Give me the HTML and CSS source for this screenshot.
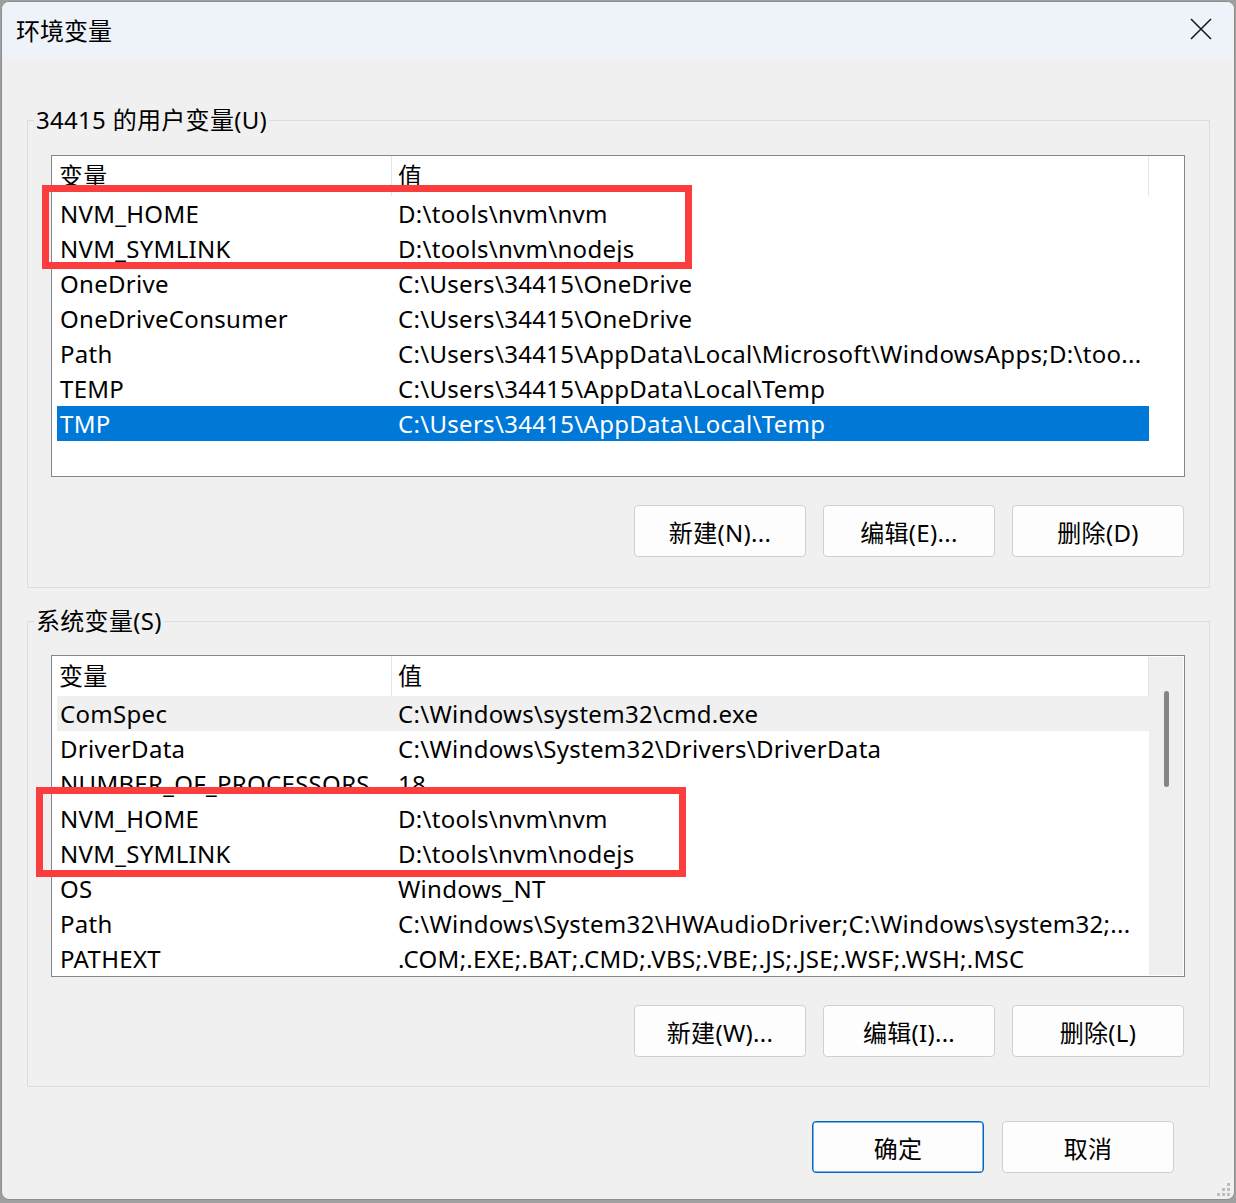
FILE: index.html
```html
<!DOCTYPE html>
<html lang="zh-CN">

<head>
    <meta charset="UTF-8">
    <meta name="viewport" content="width=device-width, initial-scale=1.0">
    <title>环境变量</title>
    <link rel="stylesheet" href="styles.css">
</head>

<body>
    <div class="dialog">
        <div class="titlebar">
            <span class="title">环境变量</span>
            <svg class="close" width="22" height="22" viewBox="0 0 22 22">
                <path d="M1 1 L21 21 M21 1 L1 21" stroke="#1a1a1a" stroke-width="1.6" fill="none" />
            </svg>
        </div>

        <div class="content">
            <!-- 用户变量 -->
            <fieldset class="group group-user">
                <legend>34415 的用户变量(U)</legend>
                <div class="list">
                    <div class="list-main">
                        <div class="list-head">
                            <div class="head-name">变量</div>
                            <div class="head-value">值</div>
                        </div>
                        <div class="row"><span class="cell-name">NVM_HOME</span><span class="cell-value">D:\tools\nvm\nvm</span></div>
                        <div class="row"><span class="cell-name">NVM_SYMLINK</span><span class="cell-value">D:\tools\nvm\nodejs</span></div>
                        <div class="row"><span class="cell-name">OneDrive</span><span class="cell-value">C:\Users\34415\OneDrive</span></div>
                        <div class="row"><span class="cell-name">OneDriveConsumer</span><span class="cell-value">C:\Users\34415\OneDrive</span></div>
                        <div class="row"><span class="cell-name">Path</span><span class="cell-value">C:\Users\34415\AppData\Local\Microsoft\WindowsApps;D:\too...</span></div>
                        <div class="row"><span class="cell-name">TEMP</span><span class="cell-value">C:\Users\34415\AppData\Local\Temp</span></div>
                        <div class="row selected"><span class="cell-name">TMP</span><span class="cell-value">C:\Users\34415\AppData\Local\Temp</span></div>
                    </div>
                    <div class="list-side"></div>
                </div>
                <div class="buttons">
                    <button class="btn">新建(N)...</button>
                    <button class="btn">编辑(E)...</button>
                    <button class="btn">删除(D)</button>
                </div>
            </fieldset>

            <!-- 系统变量 -->
            <fieldset class="group group-system">
                <legend>系统变量(S)</legend>
                <div class="list">
                    <div class="list-main">
                        <div class="list-head">
                            <div class="head-name">变量</div>
                            <div class="head-value">值</div>
                        </div>
                        <div class="row hover"><span class="cell-name">ComSpec</span><span class="cell-value">C:\Windows\system32\cmd.exe</span></div>
                        <div class="row"><span class="cell-name">DriverData</span><span class="cell-value">C:\Windows\System32\Drivers\DriverData</span></div>
                        <div class="row"><span class="cell-name">NUMBER_OF_PROCESSORS</span><span class="cell-value">18</span></div>
                        <div class="row"><span class="cell-name">NVM_HOME</span><span class="cell-value">D:\tools\nvm\nvm</span></div>
                        <div class="row"><span class="cell-name">NVM_SYMLINK</span><span class="cell-value">D:\tools\nvm\nodejs</span></div>
                        <div class="row"><span class="cell-name">OS</span><span class="cell-value">Windows_NT</span></div>
                        <div class="row"><span class="cell-name">Path</span><span class="cell-value">C:\Windows\System32\HWAudioDriver;C:\Windows\system32;...</span></div>
                        <div class="row"><span class="cell-name">PATHEXT</span><span class="cell-value">.COM;.EXE;.BAT;.CMD;.VBS;.VBE;.JS;.JSE;.WSF;.WSH;.MSC</span></div>
                    </div>
                    <div class="list-side scrollbar">
                        <div class="thumb"></div>
                    </div>
                </div>
                <div class="buttons">
                    <button class="btn">新建(W)...</button>
                    <button class="btn">编辑(I)...</button>
                    <button class="btn">删除(L)</button>
                </div>
            </fieldset>

            <div class="footer">
                <button class="btn btn-default">确定</button>
                <button class="btn">取消</button>
            </div>
        </div>

        <!-- 标注框 -->
        <div class="mark mark-user"></div>
        <div class="mark mark-system"></div>

        <svg class="grip" width="16" height="16" viewBox="0 0 16 16">
            <rect x="13" y="3" width="3" height="3" fill="#bdbdbd" />
            <rect x="8" y="8" width="3" height="3" fill="#bdbdbd" />
            <rect x="13" y="8" width="3" height="3" fill="#bdbdbd" />
            <rect x="3" y="13" width="3" height="3" fill="#bdbdbd" />
            <rect x="8" y="13" width="3" height="3" fill="#bdbdbd" />
            <rect x="13" y="13" width="3" height="3" fill="#bdbdbd" />
        </svg>
    </div>
</body>

</html>
```

FILE: styles.css
```css
body {
    margin: 0;
    background-color: #9f9f9f;
    font-family: 'Noto Sans', 'Noto Sans CJK SC', sans-serif;
    font-size: 24px;
    letter-spacing: 0.3px;
    color: #000;
    height: 1203px;
    overflow: hidden;
}

.dialog {
    position: relative;
    box-sizing: border-box;
    width: 1234px;
    height: 1199px;
    margin: 1px 0 0 1px;
    border: 1px solid #8e8e8e;
    border-radius: 8px;
    background-color: #f0f0f0;
    overflow: hidden;
}

.titlebar {
    height: 56px;
    display: flex;
    align-items: center;
    justify-content: space-between;
    padding: 0 22px 2px 14px;
    background-color: #eef3f9;
    box-sizing: border-box;
}

.title {
    font-size: 24px;
    letter-spacing: 0;
}

.content {
    display: flex;
    flex-direction: column;
    align-items: flex-start;
}

.group {
    box-sizing: border-box;
    width: 1183px;
    min-width: 0;
    margin: 0 0 0 25px;
    border: 1px solid #dcdcdc;
    padding: 20px 23px 30px 23px;
}

.group legend {
    margin-left: -17px;
    padding: 0 2px;
    line-height: 30px;
}

.group-user {
    margin-top: 47px;
}

.group-system {
    margin-top: 18px;
    padding-top: 19px;
    padding-bottom: 29px;
}

.list {
    display: flex;
    box-sizing: border-box;
    width: 1134px;
    height: 322px;
    border: 1px solid #828790;
    background: white;
}

.list-main {
    width: 1092px;
    padding-left: 5px;
    overflow: hidden;
}

.list-head {
    display: flex;
    height: 40px;
    border-right: 1px solid #e5e5e5;
}

.head-name {
    width: 332px;
    padding-left: 2px;
    border-right: 1px solid #e5e5e5;
    line-height: 40px;
}

.head-value {
    padding-left: 6px;
    line-height: 40px;
}

.row {
    display: flex;
    height: 35px;
    line-height: 35px;
    white-space: nowrap;
    overflow: hidden;
}

.cell-name {
    flex: none;
    width: 338px;
    padding-left: 3px;
}

.cell-value {
    overflow: hidden;
}

.row.selected {
    background-color: #0078d7;
    color: white;
}

.row.hover {
    background-color: #f0f0f0;
}

.list-side {
    flex: 1;
}

.scrollbar {
    position: relative;
    margin: 1px 1px 1px 0;
    background-color: #efefef;
}

.thumb {
    width: 5px;
    height: 96px;
    margin: 34px 0 0 15px;
    border-radius: 3px;
    background-color: #858585;
}

.buttons {
    display: flex;
    justify-content: flex-end;
    gap: 17px;
    margin-top: 28px;
    padding-right: 2px;
}

.btn {
    box-sizing: border-box;
    width: 172px;
    height: 52px;
    border: 1px solid #d0d0d0;
    border-radius: 4px;
    background-color: #fdfdfd;
    font-family: 'Noto Sans', 'Noto Sans CJK SC', sans-serif;
    font-size: 24px;
    letter-spacing: 0.3px;
    color: #000;
    padding: 0;
}

.btn-default {
    border-color: #0067c0;
    box-shadow: inset 0 0 0 0.5px #0067c0;
}

.footer {
    display: flex;
    gap: 18px;
    align-self: flex-end;
    margin: 34px 60px 0 0;
}

.mark {
    position: absolute;
    box-sizing: border-box;
    border: 7px solid #fc3d3d;
}

.mark-user {
    left: 40px;
    top: 183px;
    width: 650px;
    height: 84px;
}

.mark-system {
    left: 34px;
    top: 785px;
    width: 650px;
    height: 90px;
}

.grip {
    position: absolute;
    right: 4px;
    bottom: 3px;
}
```
